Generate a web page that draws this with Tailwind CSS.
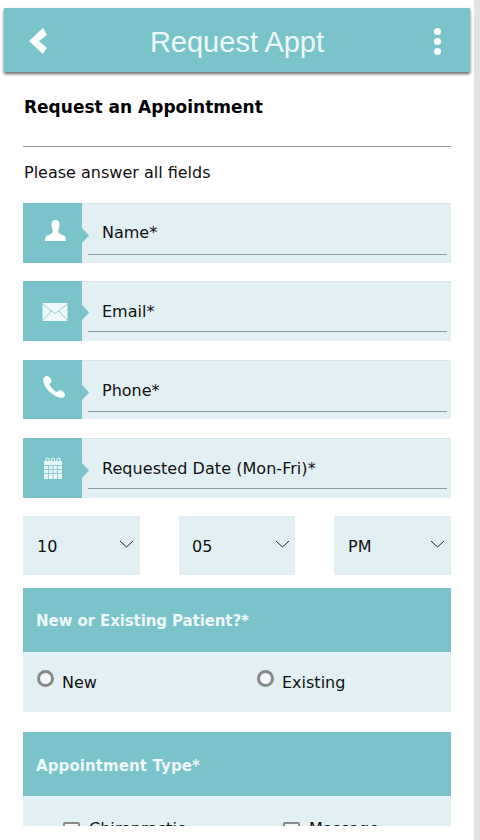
<!DOCTYPE html>
<html lang="en">
<head>
    <meta charset="UTF-8">
    <meta name="viewport" content="width=device-width, initial-scale=1.0">
    <title>Request Appt</title>
    <script src="https://cdn.jsdelivr.net/npm/@tailwindcss/browser@4"></script>
</head>
<body class="bg-white overflow-hidden">
    <div class="flex h-[840px] w-[480px] font-['DejaVu_Sans',sans-serif] text-[#111]">
        <div class="w-[474px] h-[826px] overflow-hidden shrink-0">
            <div class="pt-2 px-1">
                <header class="relative h-16 w-[466px] bg-[#7ac3cb] shadow-[0_2px_3px_rgba(0,0,0,0.6)] flex items-center justify-center">
                    <svg class="absolute left-[24px] top-[19px]" width="20" height="28" viewBox="0 0 20 28"><path d="M15 1 L19 8 L11 14 L19 21 L15 27 L1 14 Z" fill="#fff"/></svg>
                    <h1 class="font-['Liberation_Sans',sans-serif] text-[29px] text-[#eef8f9] mt-[6px]">Request Appt</h1>
                    <div class="absolute left-[430px] top-[20px] flex flex-col gap-[3px]">
                        <span class="w-[7px] h-[7px] rounded-full bg-white"></span>
                        <span class="w-[7px] h-[7px] rounded-full bg-white"></span>
                        <span class="w-[7px] h-[7px] rounded-full bg-white"></span>
                    </div>
                </header>
            </div>

            <div class="pl-[23px] w-[451px]">
                <h2 class="font-bold text-[17px] leading-6 mt-[23px] ml-[1px] text-black">Request an Appointment</h2>
                <div class="border-t border-[#999] mt-[27px]"></div>
                <p class="text-[16px] leading-6 ml-[1px] mt-[14px]">Please answer all fields</p>

                <div class="flex h-[60px] mt-[18px] bg-[#e2f0f4]">
                    <div class="relative w-[59px] bg-[#7ac3cb] flex items-center justify-center shrink-0">
                        <svg class="ml-[6px] mb-[6px]" width="23" height="21" viewBox="0 0 26 24"><path d="M13 0 C9 0 8 3 8.500 7 C9 10 10 11 10 13 C10 15 7 16 3 18 C1.500 19 1 21 1 24 L25 24 C25 21 24.500 19 23 18 C19 16 16 15 16 13 C16 11 17 10 17.500 7 C18 3 17 0 13 0 Z" fill="#fff"/></svg>
                        <span class="absolute right-[-7px] top-[25px] w-[7px] h-[15px] bg-[#7ac3cb] [clip-path:polygon(0_0,100%_50%,0_100%)]"></span>
                    </div>
                    <div class="flex-1 pl-[6px] pr-[4px] border-t border-[#d9e6e8]">
                        <div class="h-[51px] border-b border-[#8aa0a3] pl-[14px] pt-[17px] text-[16px] leading-6">Name*</div>
                    </div>
                </div>

                <div class="flex h-[60px] mt-[18px] bg-[#e2f0f4]">
                    <div class="relative w-[59px] bg-[#7ac3cb] flex items-center justify-center shrink-0">
                        <svg class="ml-[5px] mt-[2px]" width="26" height="18" viewBox="0 0 26 18">
                            <rect x="0.500" y="0" width="25" height="18" fill="#eef8f9"/>
                            <path d="M0.500 1 L13 10.500 L25.500 1 M0.500 17.500 L9.500 7.800 M25.500 17.500 L16.500 7.800" stroke="#7ac3cb" stroke-width="0.8" fill="none"/>
                        </svg>
                        <span class="absolute right-[-7px] top-[24px] w-[7px] h-[15px] bg-[#7ac3cb] [clip-path:polygon(0_0,100%_50%,0_100%)]"></span>
                    </div>
                    <div class="flex-1 pl-[6px] pr-[4px] border-t border-[#d9e6e8]">
                        <div class="h-[50px] border-b border-[#8aa0a3] pl-[14px] pt-[18px] text-[16px] leading-6">Email*</div>
                    </div>
                </div>

                <div class="flex h-[59px] mt-[19px] bg-[#e2f0f4]">
                    <div class="relative w-[59px] bg-[#7ac3cb] flex items-center justify-center shrink-0">
                        <svg class="ml-[2px] mb-[6px]" width="24" height="24" viewBox="0 0 24 24"><path d="M5 1 C3 1 1 3 1 5 C2 13 10 21 19 23 C21 23 23 22 23 20 C23 18 20 15 18 15 C16.500 15 15.500 17 14.500 17 C11.500 15.500 8.500 12 7.500 9 C7.500 8 9.500 7.500 9.500 6 C9.500 4 7 1 5 1 Z" fill="#fff"/></svg>
                        <span class="absolute right-[-7px] top-[25px] w-[7px] h-[15px] bg-[#7ac3cb] [clip-path:polygon(0_0,100%_50%,0_100%)]"></span>
                    </div>
                    <div class="flex-1 pl-[6px] pr-[4px] border-t border-[#d9e6e8]">
                        <div class="h-[51px] border-b border-[#8aa0a3] pl-[14px] pt-[18px] text-[16px] leading-6">Phone*</div>
                    </div>
                </div>

                <div class="flex h-[60px] mt-[19px] bg-[#e2f0f4]">
                    <div class="relative w-[59px] bg-[#7ac3cb] flex items-center justify-center shrink-0">
                        <svg width="20" height="22" viewBox="0 0 20 22">
                            <path d="M1 4 H19 V22 H1 Z" fill="#e8f5f7"/>
                            <path d="M1 8.500 H19 M1 12.500 H19 M1 16.500 H19 M5.500 8 V22 M10 8 V22 M14.500 8 V22" stroke="#7ac3cb" stroke-width="0.8" fill="none"/>
                            <path d="M3 5 V2.500 A1.500 1.500 0 0 1 6 2.500 V5 M8.500 5 V2.500 A1.500 1.500 0 0 1 11.500 2.500 V5 M14 5 V2.500 A1.500 1.500 0 0 1 17 2.500 V5" stroke="#e8f5f7" stroke-width="1.100" fill="none"/>
                        </svg>
                        <span class="absolute right-[-7px] top-[25px] w-[7px] h-[15px] bg-[#7ac3cb] [clip-path:polygon(0_0,100%_50%,0_100%)]"></span>
                    </div>
                    <div class="flex-1 pl-[6px] pr-[4px] border-t border-[#d9e6e8]">
                        <div class="h-[50px] border-b border-[#8aa0a3] pl-[14px] pt-[18px] text-[16px] leading-6 tracking-[0.05px]">Requested Date (Mon-Fri)*</div>
                    </div>
                </div>

                <div class="flex justify-between mt-[18px]">
                    <div class="relative w-[117px] h-[59px] bg-[#e2f0f4] pl-[14px] pt-[19px] text-[16px] leading-6">10
                        <svg class="absolute right-[6px] top-[24px]" width="15" height="9" viewBox="0 0 15 9"><path d="M1 1 L7.500 7 L14 1" stroke="#222" stroke-width="1" fill="none"/></svg>
                    </div>
                    <div class="relative w-[116px] h-[59px] bg-[#e2f0f4] pl-[13px] pt-[19px] text-[16px] leading-6">05
                        <svg class="absolute right-[5px] top-[24px]" width="15" height="9" viewBox="0 0 15 9"><path d="M1 1 L7.500 7 L14 1" stroke="#222" stroke-width="1" fill="none"/></svg>
                    </div>
                    <div class="relative w-[117px] h-[59px] bg-[#e2f0f4] pl-[14px] pt-[19px] text-[16px] leading-6">PM
                        <svg class="absolute right-[6px] top-[24px]" width="15" height="9" viewBox="0 0 15 9"><path d="M1 1 L7.500 7 L14 1" stroke="#222" stroke-width="1" fill="none"/></svg>
                    </div>
                </div>

                <section class="mt-[13px]">
                    <div class="h-16 bg-[#7ac3cb] pl-[13px] pt-[2px] flex items-center font-bold text-[15px] tracking-[-0.1px] text-[#eef8f9]">New or Existing Patient?*</div>
                    <div class="h-[60px] bg-[#e2f0f4] grid grid-cols-[220px_1fr] pl-[14px] pt-[16px] text-[16px] leading-6">
                        <div class="flex gap-2">
                            <span class="w-[17px] h-[17px] rounded-full border-[3px] border-[#888] bg-[#f2f8fa] mt-[2px]"></span><span class="mt-[3px]">New</span>
                        </div>
                        <div class="flex gap-2">
                            <span class="w-[17px] h-[17px] rounded-full border-[3px] border-[#888] bg-[#f2f8fa] mt-[2px]"></span><span class="mt-[3px]">Existing</span>
                        </div>
                    </div>
                </section>

                <section class="mt-5">
                    <div class="h-16 bg-[#7ac3cb] pl-[13px] pt-[4px] flex items-center font-bold text-[15px] tracking-[0.1px] text-[#eef8f9]">Appointment Type*</div>
                    <div class="h-[60px] bg-[#e2f0f4] grid grid-cols-[220px_1fr] pl-10 pt-[21px] text-[16px] leading-6">
                        <div class="flex gap-[9px]">
                            <span class="w-[17px] h-[17px] rounded-[2px] border-2 border-[#888] bg-[#f2f8fa] mt-[5px]"></span><span>Chiropractic</span>
                        </div>
                        <div class="flex gap-[9px]">
                            <span class="w-[17px] h-[17px] rounded-[2px] border-2 border-[#888] bg-[#f2f8fa] mt-[5px]"></span><span>Massage</span>
                        </div>
                    </div>
                </section>
            </div>
        </div>
        <div class="w-[6px] h-full bg-[#e2e3e6]"></div>
    </div>
</body>
</html>
